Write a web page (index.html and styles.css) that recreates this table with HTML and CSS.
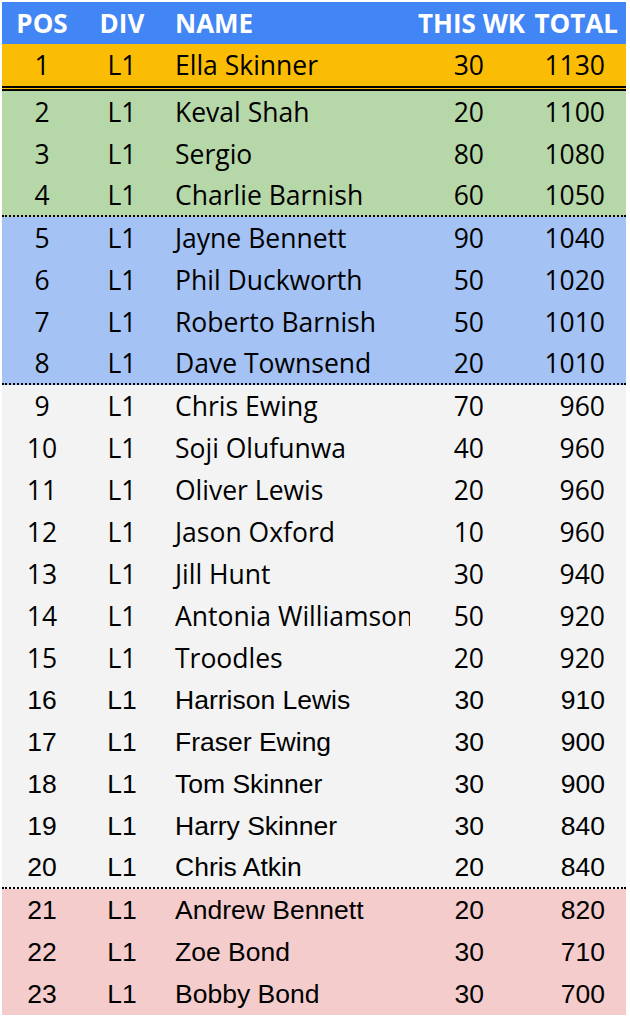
FILE: index.html
```html
<!DOCTYPE html>
<html>
<head>
<meta charset="utf-8">
<link rel="stylesheet" href="styles.css">
</head>
<body>
<div class="table">
  <div class="row head">
    <div class="c pos">POS</div><div class="c div">DIV</div><div class="c name">NAME</div><div class="c wk wkh">THIS WK</div><div class="c tot">TOTAL</div>
  </div>
  <div class="row gold leader"><div class="c pos">1</div><div class="c div">L1</div><div class="c name">Ella Skinner</div><div class="c wk">30</div><div class="c tot">1130</div></div>
  <div class="row green"><div class="c pos">2</div><div class="c div">L1</div><div class="c name">Keval Shah</div><div class="c wk">20</div><div class="c tot">1100</div></div>
  <div class="row green"><div class="c pos">3</div><div class="c div">L1</div><div class="c name">Sergio</div><div class="c wk">80</div><div class="c tot">1080</div></div>
  <div class="row green sep"><div class="c pos">4</div><div class="c div">L1</div><div class="c name">Charlie Barnish</div><div class="c wk">60</div><div class="c tot">1050</div></div>
  <div class="row blue"><div class="c pos">5</div><div class="c div">L1</div><div class="c name">Jayne Bennett</div><div class="c wk">90</div><div class="c tot">1040</div></div>
  <div class="row blue"><div class="c pos">6</div><div class="c div">L1</div><div class="c name">Phil Duckworth</div><div class="c wk">50</div><div class="c tot">1020</div></div>
  <div class="row blue"><div class="c pos">7</div><div class="c div">L1</div><div class="c name">Roberto Barnish</div><div class="c wk">50</div><div class="c tot">1010</div></div>
  <div class="row blue sep"><div class="c pos">8</div><div class="c div">L1</div><div class="c name">Dave Townsend</div><div class="c wk">20</div><div class="c tot">1010</div></div>
  <div class="row grey"><div class="c pos">9</div><div class="c div">L1</div><div class="c name">Chris Ewing</div><div class="c wk">70</div><div class="c tot">960</div></div>
  <div class="row grey"><div class="c pos">10</div><div class="c div">L1</div><div class="c name">Soji Olufunwa</div><div class="c wk">40</div><div class="c tot">960</div></div>
  <div class="row grey"><div class="c pos">11</div><div class="c div">L1</div><div class="c name">Oliver Lewis</div><div class="c wk">20</div><div class="c tot">960</div></div>
  <div class="row grey"><div class="c pos">12</div><div class="c div">L1</div><div class="c name">Jason Oxford</div><div class="c wk">10</div><div class="c tot">960</div></div>
  <div class="row grey"><div class="c pos">13</div><div class="c div">L1</div><div class="c name">Jill Hunt</div><div class="c wk">30</div><div class="c tot">940</div></div>
  <div class="row grey"><div class="c pos">14</div><div class="c div">L1</div><div class="c name">Antonia Williamson</div><div class="c wk">50</div><div class="c tot">920</div></div>
  <div class="row grey"><div class="c pos">15</div><div class="c div">L1</div><div class="c name">Troodles</div><div class="c wk">20</div><div class="c tot">920</div></div>
  <div class="row grey arial"><div class="c pos">16</div><div class="c div">L1</div><div class="c name">Harrison Lewis</div><div class="c wk">30</div><div class="c tot">910</div></div>
  <div class="row grey arial"><div class="c pos">17</div><div class="c div">L1</div><div class="c name">Fraser Ewing</div><div class="c wk">30</div><div class="c tot">900</div></div>
  <div class="row grey arial"><div class="c pos">18</div><div class="c div">L1</div><div class="c name">Tom Skinner</div><div class="c wk">30</div><div class="c tot">900</div></div>
  <div class="row grey arial"><div class="c pos">19</div><div class="c div">L1</div><div class="c name">Harry Skinner</div><div class="c wk">30</div><div class="c tot">840</div></div>
  <div class="row grey arial sep"><div class="c pos">20</div><div class="c div">L1</div><div class="c name">Chris Atkin</div><div class="c wk">20</div><div class="c tot">840</div></div>
  <div class="row pink arial"><div class="c pos">21</div><div class="c div">L1</div><div class="c name">Andrew Bennett</div><div class="c wk">20</div><div class="c tot">820</div></div>
  <div class="row pink arial"><div class="c pos">22</div><div class="c div">L1</div><div class="c name">Zoe Bond</div><div class="c wk">30</div><div class="c tot">710</div></div>
  <div class="row pink arial"><div class="c pos">23</div><div class="c div">L1</div><div class="c name">Bobby Bond</div><div class="c wk">30</div><div class="c tot">700</div></div>
</div>
</body>
</html>
```

FILE: styles.css
```css
html, body {
  margin: 0;
  padding: 0;
  background: #ffffff;
}
.table {
  padding: 2px 4px 2px 2px;
  width: 624px;
  font-family: "Open Sans", "Liberation Sans", sans-serif;
  font-size: 26.5px;
  color: #000000;
}
.row {
  display: grid;
  grid-template-columns: 80px 80px 248px 80px 136px;
  height: 42px;
  box-sizing: border-box;
  align-items: center;
}
.c {
  white-space: nowrap;
  overflow: hidden;
  line-height: 43px;
}
.pos, .div { text-align: center; }
.name { padding-left: 13px; }
.wk { text-align: right; padding-right: 6px; }
.tot { text-align: right; padding-right: 21px; }
.head {
  background: #4285f4;
  color: #ffffff;
  font-weight: 700;
  font-size: 26px;
}
.head .c { overflow: visible; line-height: 42px; }
.head .wkh { text-align: left; padding-left: 8px; padding-right: 0; }
.head .tot { padding-right: 8px; }
.gold { background: #fbbc04; }
.leader {
  height: 47px;
  border-bottom: 5px double #000000;
}
.green { background: #b6d7a8; }
.blue { background: #a4c2f4; }
.grey { background: #f3f3f3; }
.pink { background: #f4cccc; }
.sep { border-bottom: 2px dotted #000000; }
.sep .c { line-height: 41px; }
.arial { font-family: "Liberation Sans", Arial, sans-serif; }
```
